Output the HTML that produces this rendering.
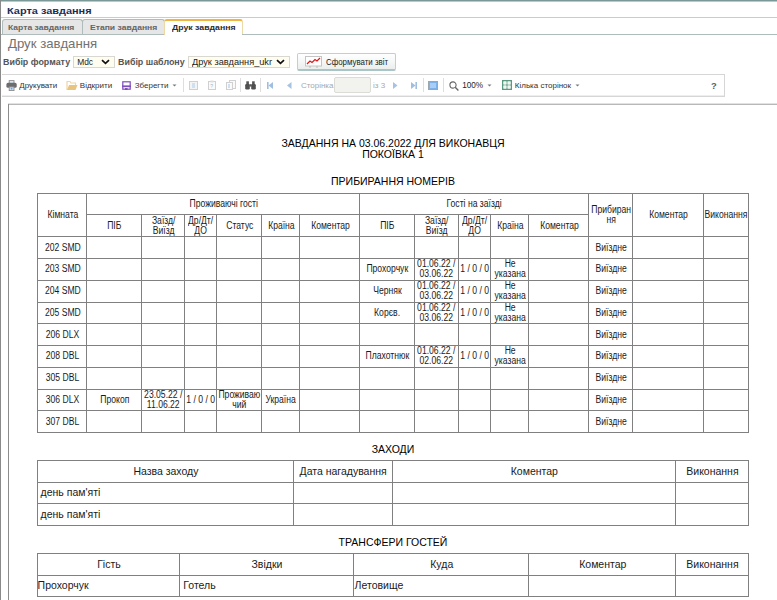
<!DOCTYPE html>
<html><head><meta charset="utf-8">
<style>
html,body{margin:0;padding:0;}
body{width:777px;height:600px;overflow:hidden;position:relative;background:#fff;font-family:"Liberation Sans",sans-serif;color:#000;}
.l{position:absolute;}
.c{position:absolute;display:flex;align-items:center;box-sizing:border-box;white-space:nowrap;color:#1a1a1a;}
.c span{display:block;}
.t{position:absolute;white-space:nowrap;}
.ico{position:absolute;}
</style></head><body>
<!-- window frame -->
<div class="l" style="left:0;top:0;width:777px;height:1px;background:#7a9896"></div>
<div class="l" style="left:0;top:1px;width:777px;height:1px;background:#c4c6c0"></div>
<div class="l" style="left:0;top:0;width:1px;height:600px;background:#8a8a8a"></div>
<div class="t" style="left:7px;top:7px;font-size:9.2px;line-height:9.2px;font-weight:bold;color:#1c2d55;transform:scaleX(1.19);transform-origin:0 0">Карта завдання</div>
<div class="l" style="left:1px;top:17px;width:776px;height:1px;background:#c8cccc"></div>
<!-- tabs -->
<div style="position:absolute;left:2px;top:19px;width:79px;height:14px;background:#e6e6e6;border:1px solid #aebcbc;border-bottom:none;border-radius:3px 3px 0 0"></div>
<div style="position:absolute;left:82px;top:19px;width:81px;height:14px;background:#e6e6e6;border:1px solid #aebcbc;border-bottom:none;border-radius:3px 3px 0 0"></div>
<div style="position:absolute;left:164px;top:19px;width:77px;height:14px;background:#fff;border:1px solid #ecd9a8;border-top:2px solid #f0b540;border-bottom:none;border-radius:3px 3px 0 0"></div>
<div class="l" style="left:1px;top:34px;width:163px;height:1px;background:#aebcbc"></div>
<div class="l" style="left:242px;top:34px;width:535px;height:1px;background:#aebcbc"></div>
<div class="t" style="left:8.4px;top:24px;font-size:7.4px;line-height:7.4px;font-weight:bold;color:#656565;transform:scaleX(1.16);transform-origin:0 0">Карта завдання</div>
<div class="t" style="left:90.1px;top:24px;font-size:7.4px;line-height:7.4px;font-weight:bold;color:#656565;transform:scaleX(1.16);transform-origin:0 0">Етапи завдання</div>
<div class="t" style="left:171.7px;top:24px;font-size:7.4px;line-height:7.4px;font-weight:bold;color:#2b2b2b;transform:scaleX(1.18);transform-origin:0 0">Друк завдання</div>
<!-- heading -->
<div class="t" style="left:8px;top:37px;font-size:13.2px;line-height:13.2px;font-weight:normal;color:#727272;">Друк завдання</div>
<div class="t" style="left:3.4px;top:58px;font-size:8.6px;line-height:8.6px;font-weight:bold;color:#555;transform:scaleX(1.035);transform-origin:0 0">Вибір формату</div>
<div style="position:absolute;left:73px;top:56px;width:40px;height:10px;background:#fffdf0;border:1px solid #d8d8d0"></div>
<div class="t" style="left:77.2px;top:58px;font-size:8.4px;line-height:8.4px;font-weight:normal;color:#222;">Mdc</div>
<svg class="ico" style="left:101px;top:58.5px" width="9" height="6" viewBox="0 0 9 6"><path d="M1 1.2 L4.5 4.4 L8 1.2" stroke="#111" stroke-width="1.7" fill="none"/></svg>
<div class="t" style="left:118px;top:58px;font-size:8.6px;line-height:8.6px;font-weight:bold;color:#555;transform:scaleX(1.035);transform-origin:0 0">Вибір шаблону</div>
<div style="position:absolute;left:188px;top:56px;width:100px;height:10px;background:#fffdf0;border:1px solid #d8d8d0"></div>
<div class="t" style="left:192px;top:58px;font-size:8.6px;line-height:8.6px;font-weight:normal;color:#222;transform:scaleX(1.07);transform-origin:0 0">Друк завдання_ukr</div>
<svg class="ico" style="left:275.5px;top:59px" width="9" height="6" viewBox="0 0 9 6"><path d="M1 1.2 L4.5 4.4 L8 1.2" stroke="#111" stroke-width="1.7" fill="none"/></svg>
<!-- button -->
<div style="position:absolute;left:297px;top:53px;width:97px;height:15px;border:1px solid #b9d3d3;border-bottom:2px solid #a9c6c6;border-radius:2px;background:linear-gradient(#ffffff,#eceeee)"></div>
<svg class="ico" style="left:305px;top:56px" width="17" height="12" viewBox="0 0 17 12"><rect x="0.5" y="0.5" width="16" height="9.5" fill="#fff" stroke="#c4c4c4"/><path d="M2 8 L5 5 L7 6.5 L10 3.5 L12 5 L15 2" stroke="#e01818" stroke-width="1.3" fill="none"/><path d="M4 11 L6 11 M11 11 L13 11" stroke="#bbb"/></svg>
<div class="t" style="left:325.5px;top:58px;font-size:8.3px;line-height:8.3px;font-weight:normal;color:#1a1a1a;transform:scaleX(0.95);transform-origin:0 0">Сформувати звіт</div>
<!-- toolbar -->
<div style="position:absolute;left:2px;top:74px;width:722px;height:21px;border:1px solid #d6d6d6;border-left:none;background:#fff"></div>
<div class="l" style="left:2px;top:95px;width:722px;height:1px;background:#eeeeee"></div>
<svg class="ico" style="left:6px;top:80px" width="11" height="11" viewBox="0 0 11 11"><rect x="3.2" y="0.6" width="4.8" height="3.4" fill="#dbe8f6" stroke="#8a8a8a" stroke-width="0.9"/><rect x="0.4" y="2.8" width="10.3" height="5" rx="1.6" fill="#6c6c6c"/><rect x="3.2" y="6.9" width="4.8" height="3.7" fill="#cfe2f7" stroke="#8a8a8a" stroke-width="0.9"/><circle cx="5.6" cy="8.7" r="0.9" fill="#6aa0e0"/></svg>
<div class="t" style="left:19.3px;top:82px;font-size:8px;line-height:8px;font-weight:normal;color:#333;">Друкувати</div>
<svg class="ico" style="left:66px;top:80px" width="12" height="11" viewBox="0 0 12 11"><path d="M1 10 L1 1.5 L4 1.5 L5 3 L9.5 3 L9.5 5" fill="#fff" stroke="#efd6a8" stroke-width="1.2"/><path d="M1 10 L3 5 L11.5 5 L9.5 10 Z" fill="#e9c47f"/></svg>
<div class="t" style="left:79.8px;top:82px;font-size:8px;line-height:8px;font-weight:normal;color:#333;">Відкрити</div>
<svg class="ico" style="left:122px;top:81px" width="9" height="9" viewBox="0 0 9 9"><rect x="0.8" y="0.8" width="7.4" height="7.4" fill="#fff" stroke="#8452c0" stroke-width="1.25"/><rect x="0" y="4.4" width="9" height="1.8" fill="#7f4fbb"/><rect x="3" y="7" width="2.6" height="2" fill="#7f4fbb"/></svg>
<div class="t" style="left:134.7px;top:82px;font-size:8px;line-height:8px;font-weight:normal;color:#333;">Зберегти</div>
<svg class="ico" style="left:172px;top:84px" width="5" height="3" viewBox="0 0 5 3"><path d="M0.5 0.5 L4.5 0.5 L2.5 2.6 Z" fill="#7a7a7a"/></svg>
<div class="l" style="left:183px;top:78px;width:1px;height:14px;background:#dedede"></div>
<svg class="ico" style="left:189px;top:81px" width="9" height="9" viewBox="0 0 9 9"><rect x="0.5" y="0.5" width="8" height="8" fill="#f4f4f4" stroke="#d0d0d0"/><rect x="3" y="2" width="3" height="5" fill="#cfe0f0"/></svg>
<svg class="ico" style="left:208px;top:80px" width="8" height="10" viewBox="0 0 8 10"><rect x="0.5" y="1.5" width="7" height="8" fill="#fafafa" stroke="#d0d0d0"/><rect x="2.5" y="0.5" width="3" height="2" fill="#ddd"/><text x="2.3" y="8" font-size="5" fill="#9bb5d0" font-family="Liberation Sans">?</text></svg>
<svg class="ico" style="left:226px;top:80px" width="10" height="10" viewBox="0 0 10 10"><rect x="3.5" y="0.5" width="6" height="8" fill="#fafafa" stroke="#d0d0d0"/><rect x="0.5" y="2.5" width="6" height="7" fill="#fafafa" stroke="#d0d0d0"/><rect x="2" y="4" width="2" height="4" fill="#cfe0f0"/></svg>
<div class="l" style="left:240px;top:78px;width:1px;height:14px;background:#dedede"></div>
<svg class="ico" style="left:245px;top:81px" width="11" height="9" viewBox="0 0 11 9"><rect x="1.3" y="0.3" width="2.6" height="3.5" fill="#555"/><rect x="7.1" y="0.3" width="2.6" height="3.5" fill="#555"/><rect x="0.2" y="3" width="4.6" height="5.5" rx="1.2" fill="#505050"/><rect x="6.2" y="3" width="4.6" height="5.5" rx="1.2" fill="#505050"/><rect x="4.5" y="3.2" width="2" height="2.4" fill="#5a5a5a"/></svg>
<div class="l" style="left:260px;top:78px;width:1px;height:14px;background:#dedede"></div>
<svg class="ico" style="left:267px;top:82px" width="6" height="7" viewBox="0 0 6 7"><rect x="0" y="0" width="1.6" height="7" fill="#a0bfe0"/><path d="M6 0 L6 7 L1.5 3.5 Z" fill="#a0bfe0"/></svg>
<svg class="ico" style="left:287px;top:82px" width="5" height="7" viewBox="0 0 5 7"><path d="M4.5 0 L4.5 7 L0 3.5 Z" fill="#a6c3e3"/></svg>
<div class="t" style="left:300.9px;top:82px;font-size:8px;line-height:8px;font-weight:normal;color:#a8a8a8;">Сторінка</div>
<div style="position:absolute;left:334px;top:77px;width:35px;height:14px;background:#f2f2ee;border:1px solid #dcdcd6;border-radius:2px"></div>
<div class="t" style="left:373.1px;top:82px;font-size:8px;line-height:8px;font-weight:normal;color:#a8a8a8;">із 3</div>
<svg class="ico" style="left:393px;top:82px" width="5" height="7" viewBox="0 0 5 7"><path d="M0 0 L0 7 L4.5 3.5 Z" fill="#a6c3e3"/></svg>
<svg class="ico" style="left:411px;top:82px" width="6" height="7" viewBox="0 0 6 7"><path d="M0 0 L0 7 L4.5 3.5 Z" fill="#a0bfe0"/><rect x="4.4" y="0" width="1.6" height="7" fill="#a0bfe0"/></svg>
<div class="l" style="left:423px;top:78px;width:1px;height:14px;background:#dedede"></div>
<svg class="ico" style="left:428px;top:81px" width="10" height="9" viewBox="0 0 10 9"><rect x="0.5" y="0.5" width="9" height="8" fill="#7eb0ea" stroke="#9aa6b0"/><rect x="2" y="2" width="6" height="5" fill="#a9cdf5"/></svg>
<div class="l" style="left:443px;top:78px;width:1px;height:14px;background:#dedede"></div>
<svg class="ico" style="left:449px;top:81px" width="10" height="10" viewBox="0 0 10 10"><circle cx="4" cy="4" r="3.1" fill="none" stroke="#666" stroke-width="1.1"/><path d="M6.2 6.2 L9.4 9.4" stroke="#666" stroke-width="1.4"/></svg>
<div class="t" style="left:462.2px;top:82px;font-size:8.2px;line-height:8.2px;font-weight:normal;color:#1e1e1e;">100%</div>
<svg class="ico" style="left:487px;top:84px" width="5" height="3" viewBox="0 0 5 3"><path d="M0.5 0.5 L4.5 0.5 L2.5 2.6 Z" fill="#7a7a7a"/></svg>
<svg class="ico" style="left:502px;top:80px" width="10" height="10" viewBox="0 0 10 10"><rect x="0.7" y="0.7" width="8.6" height="8.6" fill="#fff" stroke="#5a9a80" stroke-width="1.4"/><path d="M5 1 L5 9 M1 5 L9 5" stroke="#5a9a80" stroke-width="1.2"/><rect x="1.6" y="1.6" width="2.8" height="2.8" fill="#eef6f2"/><rect x="5.6" y="1.6" width="2.8" height="2.8" fill="#eef6f2"/><rect x="1.6" y="5.6" width="2.8" height="2.8" fill="#eef6f2"/><rect x="5.6" y="5.6" width="2.8" height="2.8" fill="#eef6f2"/></svg>
<div class="t" style="left:514.8px;top:82px;font-size:8px;line-height:8px;font-weight:normal;color:#333;">Кілька сторінок</div>
<svg class="ico" style="left:575px;top:84px" width="5" height="3" viewBox="0 0 5 3"><path d="M0.5 0.5 L4.5 0.5 L2.5 2.6 Z" fill="#7a7a7a"/></svg>
<div class="t" style="left:711px;top:81px;font-size:9.4px;line-height:9.4px;font-weight:bold;color:#5e5e5e;">?</div>
<!-- page -->
<div class="l" style="left:8px;top:103px;width:769px;height:1px;background:#e2e2e2"></div>
<div class="l" style="left:8px;top:104px;width:769px;height:1px;background:#b8b8b8"></div>
<div class="l" style="left:8px;top:104px;width:1px;height:496px;background:#8c8c8c"></div>
<div class="t" style="left:193px;width:400px;text-align:center;top:138px;font-size:10.5px;line-height:10.5px;color:#000">ЗАВДАННЯ НА 03.06.2022 ДЛЯ ВИКОНАВЦЯ</div>
<div class="t" style="left:193px;width:400px;text-align:center;top:149px;font-size:10.5px;line-height:10.5px;color:#000">ПОКОЇВКА 1</div>
<div class="t" style="left:193px;width:400px;text-align:center;top:176px;font-size:10.5px;line-height:10.5px;color:#000">ПРИБИРАННЯ НОМЕРІВ</div>
<div class="t" style="left:193px;width:400px;text-align:center;top:444px;font-size:10.5px;line-height:10.5px;color:#000">ЗАХОДИ</div>
<div class="t" style="left:193px;width:400px;text-align:center;top:537px;font-size:10.5px;line-height:10.5px;color:#000">ТРАНСФЕРИ ГОСТЕЙ</div>
<div class="l" style="left:37px;top:193px;width:712px;height:1px;background:#808080"></div>
<div class="l" style="left:86px;top:214px;width:503px;height:1px;background:#808080"></div>
<div class="l" style="left:37px;top:236px;width:712px;height:1px;background:#808080"></div>
<div class="l" style="left:37px;top:258px;width:712px;height:1px;background:#808080"></div>
<div class="l" style="left:37px;top:280px;width:712px;height:1px;background:#808080"></div>
<div class="l" style="left:37px;top:302px;width:712px;height:1px;background:#808080"></div>
<div class="l" style="left:37px;top:323px;width:712px;height:1px;background:#808080"></div>
<div class="l" style="left:37px;top:345px;width:712px;height:1px;background:#808080"></div>
<div class="l" style="left:37px;top:367px;width:712px;height:1px;background:#808080"></div>
<div class="l" style="left:37px;top:389px;width:712px;height:1px;background:#808080"></div>
<div class="l" style="left:37px;top:410px;width:712px;height:1px;background:#808080"></div>
<div class="l" style="left:37px;top:432px;width:712px;height:1px;background:#808080"></div>
<div class="l" style="left:37px;top:193px;width:1px;height:240px;background:#808080"></div>
<div class="l" style="left:86px;top:193px;width:1px;height:240px;background:#808080"></div>
<div class="l" style="left:141px;top:214px;width:1px;height:219px;background:#808080"></div>
<div class="l" style="left:184px;top:214px;width:1px;height:219px;background:#808080"></div>
<div class="l" style="left:216px;top:214px;width:1px;height:219px;background:#808080"></div>
<div class="l" style="left:261px;top:214px;width:1px;height:219px;background:#808080"></div>
<div class="l" style="left:299px;top:214px;width:1px;height:219px;background:#808080"></div>
<div class="l" style="left:359px;top:193px;width:1px;height:240px;background:#808080"></div>
<div class="l" style="left:414px;top:214px;width:1px;height:219px;background:#808080"></div>
<div class="l" style="left:458px;top:214px;width:1px;height:219px;background:#808080"></div>
<div class="l" style="left:490px;top:214px;width:1px;height:219px;background:#808080"></div>
<div class="l" style="left:528px;top:214px;width:1px;height:219px;background:#808080"></div>
<div class="l" style="left:588px;top:193px;width:1px;height:240px;background:#808080"></div>
<div class="l" style="left:632px;top:193px;width:1px;height:240px;background:#808080"></div>
<div class="l" style="left:703px;top:193px;width:1px;height:240px;background:#808080"></div>
<div class="l" style="left:748px;top:193px;width:1px;height:240px;background:#808080"></div>
<div class="c" style="left:38.6px;top:193.7px;width:47.9px;height:42.5px;font-size:10px;line-height:10px;justify-content:center;text-align:center;padding-left:0px;"><span style="transform:scaleX(0.86)">Кімната</span></div>
<div class="c" style="left:87.5px;top:193.7px;width:272.1px;height:20.8px;font-size:10px;line-height:10px;justify-content:center;text-align:center;padding-left:0px;"><span style="transform:scaleX(0.86)">Проживаючі гості</span></div>
<div class="c" style="left:360.6px;top:193.7px;width:227.9px;height:20.8px;font-size:10px;line-height:10px;justify-content:center;text-align:center;padding-left:0px;"><span style="transform:scaleX(0.86)">Гості на заїзді</span></div>
<div class="c" style="left:589.5px;top:193.7px;width:43.4px;height:42.5px;font-size:10px;line-height:10px;justify-content:center;text-align:center;padding-left:0px;"><span style="transform:scaleX(0.86)">Прибиран<br>ня</span></div>
<div class="c" style="left:633.9px;top:193.7px;width:69.6px;height:42.5px;font-size:10px;line-height:10px;justify-content:center;text-align:center;padding-left:0px;"><span style="transform:scaleX(0.86)">Коментар</span></div>
<div class="c" style="left:704.5px;top:193.7px;width:43.7px;height:42.5px;font-size:10px;line-height:10px;justify-content:center;text-align:center;padding-left:0px;"><span style="transform:scaleX(0.86)">Виконання</span></div>
<div class="c" style="left:87.5px;top:215.5px;width:54.1px;height:20.8px;font-size:10px;line-height:10px;justify-content:center;text-align:center;padding-left:0px;"><span style="transform:scaleX(0.86)">ПІБ</span></div>
<div class="c" style="left:142.6px;top:215.5px;width:41.8px;height:20.8px;font-size:10px;line-height:10px;justify-content:center;text-align:center;padding-left:0px;"><span style="transform:scaleX(0.86)">Заїзд/<br>Виїзд</span></div>
<div class="c" style="left:185.4px;top:215.5px;width:31.3px;height:20.8px;font-size:10px;line-height:10px;justify-content:center;text-align:center;padding-left:0px;"><span style="transform:scaleX(0.86)">Др/Дт/<br>ДО</span></div>
<div class="c" style="left:217.7px;top:215.5px;width:43.5px;height:20.8px;font-size:10px;line-height:10px;justify-content:center;text-align:center;padding-left:0px;"><span style="transform:scaleX(0.86)">Статус</span></div>
<div class="c" style="left:262.2px;top:215.5px;width:37.5px;height:20.8px;font-size:10px;line-height:10px;justify-content:center;text-align:center;padding-left:0px;"><span style="transform:scaleX(0.86)">Країна</span></div>
<div class="c" style="left:300.7px;top:215.5px;width:58.9px;height:20.8px;font-size:10px;line-height:10px;justify-content:center;text-align:center;padding-left:0px;"><span style="transform:scaleX(0.86)">Коментар</span></div>
<div class="c" style="left:360.6px;top:215.5px;width:53.7px;height:20.8px;font-size:10px;line-height:10px;justify-content:center;text-align:center;padding-left:0px;"><span style="transform:scaleX(0.86)">ПІБ</span></div>
<div class="c" style="left:415.3px;top:215.5px;width:42.7px;height:20.8px;font-size:10px;line-height:10px;justify-content:center;text-align:center;padding-left:0px;"><span style="transform:scaleX(0.86)">Заїзд/<br>Виїзд</span></div>
<div class="c" style="left:459.0px;top:215.5px;width:31.4px;height:20.8px;font-size:10px;line-height:10px;justify-content:center;text-align:center;padding-left:0px;"><span style="transform:scaleX(0.86)">Др/Дт/<br>ДО</span></div>
<div class="c" style="left:491.4px;top:215.5px;width:37.5px;height:20.8px;font-size:10px;line-height:10px;justify-content:center;text-align:center;padding-left:0px;"><span style="transform:scaleX(0.86)">Країна</span></div>
<div class="c" style="left:529.9px;top:215.5px;width:58.6px;height:20.8px;font-size:10px;line-height:10px;justify-content:center;text-align:center;padding-left:0px;"><span style="transform:scaleX(0.86)">Коментар</span></div>
<div class="c" style="left:38.6px;top:237.2px;width:47.9px;height:20.8px;font-size:10px;line-height:10px;justify-content:center;text-align:center;padding-left:0px;"><span style="transform:scaleX(0.86)">202 SMD</span></div>
<div class="c" style="left:589.5px;top:237.2px;width:43.4px;height:20.8px;font-size:10px;line-height:10px;justify-content:center;text-align:center;padding-left:0px;"><span style="transform:scaleX(0.86)">Виїздне</span></div>
<div class="c" style="left:38.6px;top:259.0px;width:47.9px;height:20.8px;font-size:10px;line-height:10px;justify-content:center;text-align:center;padding-left:0px;"><span style="transform:scaleX(0.86)">203 SMD</span></div>
<div class="c" style="left:589.5px;top:259.0px;width:43.4px;height:20.8px;font-size:10px;line-height:10px;justify-content:center;text-align:center;padding-left:0px;"><span style="transform:scaleX(0.86)">Виїздне</span></div>
<div class="c" style="left:360.6px;top:259.0px;width:53.7px;height:20.8px;font-size:10px;line-height:10px;justify-content:center;text-align:center;padding-left:0px;"><span style="transform:scaleX(0.86)">Прохорчук</span></div>
<div class="c" style="left:415.3px;top:259.0px;width:42.7px;height:20.8px;font-size:10px;line-height:10px;justify-content:center;text-align:center;padding-left:0px;"><span style="transform:scaleX(0.86)">01.06.22 /<br>03.06.22</span></div>
<div class="c" style="left:459.0px;top:259.0px;width:31.4px;height:20.8px;font-size:10px;line-height:10px;justify-content:center;text-align:center;padding-left:0px;"><span style="transform:scaleX(0.86)">1 / 0 / 0</span></div>
<div class="c" style="left:491.4px;top:259.0px;width:37.5px;height:20.8px;font-size:10px;line-height:10px;justify-content:center;text-align:center;padding-left:0px;"><span style="transform:scaleX(0.86)">Не<br>указана</span></div>
<div class="c" style="left:38.6px;top:280.8px;width:47.9px;height:20.8px;font-size:10px;line-height:10px;justify-content:center;text-align:center;padding-left:0px;"><span style="transform:scaleX(0.86)">204 SMD</span></div>
<div class="c" style="left:589.5px;top:280.8px;width:43.4px;height:20.8px;font-size:10px;line-height:10px;justify-content:center;text-align:center;padding-left:0px;"><span style="transform:scaleX(0.86)">Виїздне</span></div>
<div class="c" style="left:360.6px;top:280.8px;width:53.7px;height:20.8px;font-size:10px;line-height:10px;justify-content:center;text-align:center;padding-left:0px;"><span style="transform:scaleX(0.86)">Черняк</span></div>
<div class="c" style="left:415.3px;top:280.8px;width:42.7px;height:20.8px;font-size:10px;line-height:10px;justify-content:center;text-align:center;padding-left:0px;"><span style="transform:scaleX(0.86)">01.06.22 /<br>03.06.22</span></div>
<div class="c" style="left:459.0px;top:280.8px;width:31.4px;height:20.8px;font-size:10px;line-height:10px;justify-content:center;text-align:center;padding-left:0px;"><span style="transform:scaleX(0.86)">1 / 0 / 0</span></div>
<div class="c" style="left:491.4px;top:280.8px;width:37.5px;height:20.8px;font-size:10px;line-height:10px;justify-content:center;text-align:center;padding-left:0px;"><span style="transform:scaleX(0.86)">Не<br>указана</span></div>
<div class="c" style="left:38.6px;top:302.5px;width:47.9px;height:20.8px;font-size:10px;line-height:10px;justify-content:center;text-align:center;padding-left:0px;"><span style="transform:scaleX(0.86)">205 SMD</span></div>
<div class="c" style="left:589.5px;top:302.5px;width:43.4px;height:20.8px;font-size:10px;line-height:10px;justify-content:center;text-align:center;padding-left:0px;"><span style="transform:scaleX(0.86)">Виїздне</span></div>
<div class="c" style="left:360.6px;top:302.5px;width:53.7px;height:20.8px;font-size:10px;line-height:10px;justify-content:center;text-align:center;padding-left:0px;"><span style="transform:scaleX(0.86)">Корєв.</span></div>
<div class="c" style="left:415.3px;top:302.5px;width:42.7px;height:20.8px;font-size:10px;line-height:10px;justify-content:center;text-align:center;padding-left:0px;"><span style="transform:scaleX(0.86)">01.06.22 /<br>03.06.22</span></div>
<div class="c" style="left:459.0px;top:302.5px;width:31.4px;height:20.8px;font-size:10px;line-height:10px;justify-content:center;text-align:center;padding-left:0px;"><span style="transform:scaleX(0.86)">1 / 0 / 0</span></div>
<div class="c" style="left:491.4px;top:302.5px;width:37.5px;height:20.8px;font-size:10px;line-height:10px;justify-content:center;text-align:center;padding-left:0px;"><span style="transform:scaleX(0.86)">Не<br>указана</span></div>
<div class="c" style="left:38.6px;top:324.3px;width:47.9px;height:20.8px;font-size:10px;line-height:10px;justify-content:center;text-align:center;padding-left:0px;"><span style="transform:scaleX(0.86)">206 DLX</span></div>
<div class="c" style="left:589.5px;top:324.3px;width:43.4px;height:20.8px;font-size:10px;line-height:10px;justify-content:center;text-align:center;padding-left:0px;"><span style="transform:scaleX(0.86)">Виїздне</span></div>
<div class="c" style="left:38.6px;top:346.1px;width:47.9px;height:20.8px;font-size:10px;line-height:10px;justify-content:center;text-align:center;padding-left:0px;"><span style="transform:scaleX(0.86)">208 DBL</span></div>
<div class="c" style="left:589.5px;top:346.1px;width:43.4px;height:20.8px;font-size:10px;line-height:10px;justify-content:center;text-align:center;padding-left:0px;"><span style="transform:scaleX(0.86)">Виїздне</span></div>
<div class="c" style="left:360.6px;top:346.1px;width:53.7px;height:20.8px;font-size:10px;line-height:10px;justify-content:center;text-align:center;padding-left:0px;"><span style="transform:scaleX(0.86)">Плахотнюк</span></div>
<div class="c" style="left:415.3px;top:346.1px;width:42.7px;height:20.8px;font-size:10px;line-height:10px;justify-content:center;text-align:center;padding-left:0px;"><span style="transform:scaleX(0.86)">01.06.22 /<br>02.06.22</span></div>
<div class="c" style="left:459.0px;top:346.1px;width:31.4px;height:20.8px;font-size:10px;line-height:10px;justify-content:center;text-align:center;padding-left:0px;"><span style="transform:scaleX(0.86)">1 / 0 / 0</span></div>
<div class="c" style="left:491.4px;top:346.1px;width:37.5px;height:20.8px;font-size:10px;line-height:10px;justify-content:center;text-align:center;padding-left:0px;"><span style="transform:scaleX(0.86)">Не<br>указана</span></div>
<div class="c" style="left:38.6px;top:367.9px;width:47.9px;height:20.8px;font-size:10px;line-height:10px;justify-content:center;text-align:center;padding-left:0px;"><span style="transform:scaleX(0.86)">305 DBL</span></div>
<div class="c" style="left:589.5px;top:367.9px;width:43.4px;height:20.8px;font-size:10px;line-height:10px;justify-content:center;text-align:center;padding-left:0px;"><span style="transform:scaleX(0.86)">Виїздне</span></div>
<div class="c" style="left:38.6px;top:389.6px;width:47.9px;height:20.8px;font-size:10px;line-height:10px;justify-content:center;text-align:center;padding-left:0px;"><span style="transform:scaleX(0.86)">306 DLX</span></div>
<div class="c" style="left:589.5px;top:389.6px;width:43.4px;height:20.8px;font-size:10px;line-height:10px;justify-content:center;text-align:center;padding-left:0px;"><span style="transform:scaleX(0.86)">Виїздне</span></div>
<div class="c" style="left:87.5px;top:389.6px;width:54.1px;height:20.8px;font-size:10px;line-height:10px;justify-content:center;text-align:center;padding-left:0px;"><span style="transform:scaleX(0.86)">Прокоп</span></div>
<div class="c" style="left:142.6px;top:389.6px;width:41.8px;height:20.8px;font-size:10px;line-height:10px;justify-content:center;text-align:center;padding-left:0px;"><span style="transform:scaleX(0.86)">23.05.22 /<br>11.06.22</span></div>
<div class="c" style="left:185.4px;top:389.6px;width:31.3px;height:20.8px;font-size:10px;line-height:10px;justify-content:center;text-align:center;padding-left:0px;"><span style="transform:scaleX(0.86)">1 / 0 / 0</span></div>
<div class="c" style="left:217.7px;top:389.6px;width:43.5px;height:20.8px;font-size:10px;line-height:10px;justify-content:center;text-align:center;padding-left:0px;"><span style="transform:scaleX(0.86)">Проживаю<br>чий</span></div>
<div class="c" style="left:262.2px;top:389.6px;width:37.5px;height:20.8px;font-size:10px;line-height:10px;justify-content:center;text-align:center;padding-left:0px;"><span style="transform:scaleX(0.86)">Україна</span></div>
<div class="c" style="left:38.6px;top:411.4px;width:47.9px;height:20.8px;font-size:10px;line-height:10px;justify-content:center;text-align:center;padding-left:0px;"><span style="transform:scaleX(0.86)">307 DBL</span></div>
<div class="c" style="left:589.5px;top:411.4px;width:43.4px;height:20.8px;font-size:10px;line-height:10px;justify-content:center;text-align:center;padding-left:0px;"><span style="transform:scaleX(0.86)">Виїздне</span></div>
<div class="l" style="left:37px;top:460px;width:712px;height:1px;background:#808080"></div>
<div class="l" style="left:37px;top:482px;width:712px;height:1px;background:#808080"></div>
<div class="l" style="left:37px;top:503px;width:712px;height:1px;background:#808080"></div>
<div class="l" style="left:37px;top:525px;width:712px;height:1px;background:#808080"></div>
<div class="l" style="left:37px;top:460px;width:1px;height:66px;background:#808080"></div>
<div class="l" style="left:293px;top:460px;width:1px;height:66px;background:#808080"></div>
<div class="l" style="left:392px;top:460px;width:1px;height:66px;background:#808080"></div>
<div class="l" style="left:675px;top:460px;width:1px;height:66px;background:#808080"></div>
<div class="l" style="left:748px;top:460px;width:1px;height:66px;background:#808080"></div>
<div class="c" style="left:38.6px;top:460.5px;width:254.7px;height:20.6px;font-size:10.5px;line-height:12px;justify-content:center;text-align:center;padding-left:0px;"><span>Назва заходу</span></div>
<div class="c" style="left:294.3px;top:460.5px;width:97.7px;height:20.6px;font-size:10.5px;line-height:12px;justify-content:center;text-align:center;padding-left:0px;"><span>Дата нагадування</span></div>
<div class="c" style="left:393.0px;top:460.5px;width:282.7px;height:20.6px;font-size:10.5px;line-height:12px;justify-content:center;text-align:center;padding-left:0px;"><span>Коментар</span></div>
<div class="c" style="left:676.7px;top:460.5px;width:71.5px;height:20.6px;font-size:10.5px;line-height:12px;justify-content:center;text-align:center;padding-left:0px;"><span>Виконання</span></div>
<div class="c" style="left:38.6px;top:482.1px;width:254.7px;height:20.6px;font-size:10.5px;line-height:12px;justify-content:flex-start;text-align:left;padding-left:2px;"><span>день пам'яті</span></div>
<div class="c" style="left:38.6px;top:503.7px;width:254.7px;height:20.6px;font-size:10.5px;line-height:12px;justify-content:flex-start;text-align:left;padding-left:2px;"><span>день пам'яті</span></div>
<div class="l" style="left:37px;top:553px;width:712px;height:1px;background:#808080"></div>
<div class="l" style="left:37px;top:575px;width:712px;height:1px;background:#808080"></div>
<div class="l" style="left:37px;top:596px;width:712px;height:1px;background:#808080"></div>
<div class="l" style="left:37px;top:553px;width:1px;height:44px;background:#808080"></div>
<div class="l" style="left:179px;top:553px;width:1px;height:44px;background:#808080"></div>
<div class="l" style="left:353px;top:553px;width:1px;height:44px;background:#808080"></div>
<div class="l" style="left:528px;top:553px;width:1px;height:44px;background:#808080"></div>
<div class="l" style="left:675px;top:553px;width:1px;height:44px;background:#808080"></div>
<div class="l" style="left:748px;top:553px;width:1px;height:44px;background:#808080"></div>
<div class="c" style="left:38.6px;top:553.5px;width:140.7px;height:20.6px;font-size:10.5px;line-height:12px;justify-content:center;text-align:center;padding-left:0px;"><span>Гість</span></div>
<div class="c" style="left:180.3px;top:553.5px;width:173.3px;height:20.6px;font-size:10.5px;line-height:12px;justify-content:center;text-align:center;padding-left:0px;"><span>Звідки</span></div>
<div class="c" style="left:354.6px;top:553.5px;width:174.3px;height:20.6px;font-size:10.5px;line-height:12px;justify-content:center;text-align:center;padding-left:0px;"><span>Куда</span></div>
<div class="c" style="left:529.9px;top:553.5px;width:145.8px;height:20.6px;font-size:10.5px;line-height:12px;justify-content:center;text-align:center;padding-left:0px;"><span>Коментар</span></div>
<div class="c" style="left:676.7px;top:553.5px;width:71.5px;height:20.6px;font-size:10.5px;line-height:12px;justify-content:center;text-align:center;padding-left:0px;"><span>Виконання</span></div>
<div class="c" style="left:37.6px;top:575.1px;width:141.7px;height:20.6px;font-size:10.5px;line-height:12px;justify-content:flex-start;text-align:left;padding-left:0px;"><span>Прохорчук</span></div>
<div class="c" style="left:180.3px;top:575.1px;width:173.3px;height:20.6px;font-size:10.5px;line-height:12px;justify-content:flex-start;text-align:left;padding-left:3px;"><span>Готель</span></div>
<div class="c" style="left:354.6px;top:575.1px;width:174.3px;height:20.6px;font-size:10.5px;line-height:12px;justify-content:flex-start;text-align:left;padding-left:0px;"><span>Летовище</span></div>
</body></html>
